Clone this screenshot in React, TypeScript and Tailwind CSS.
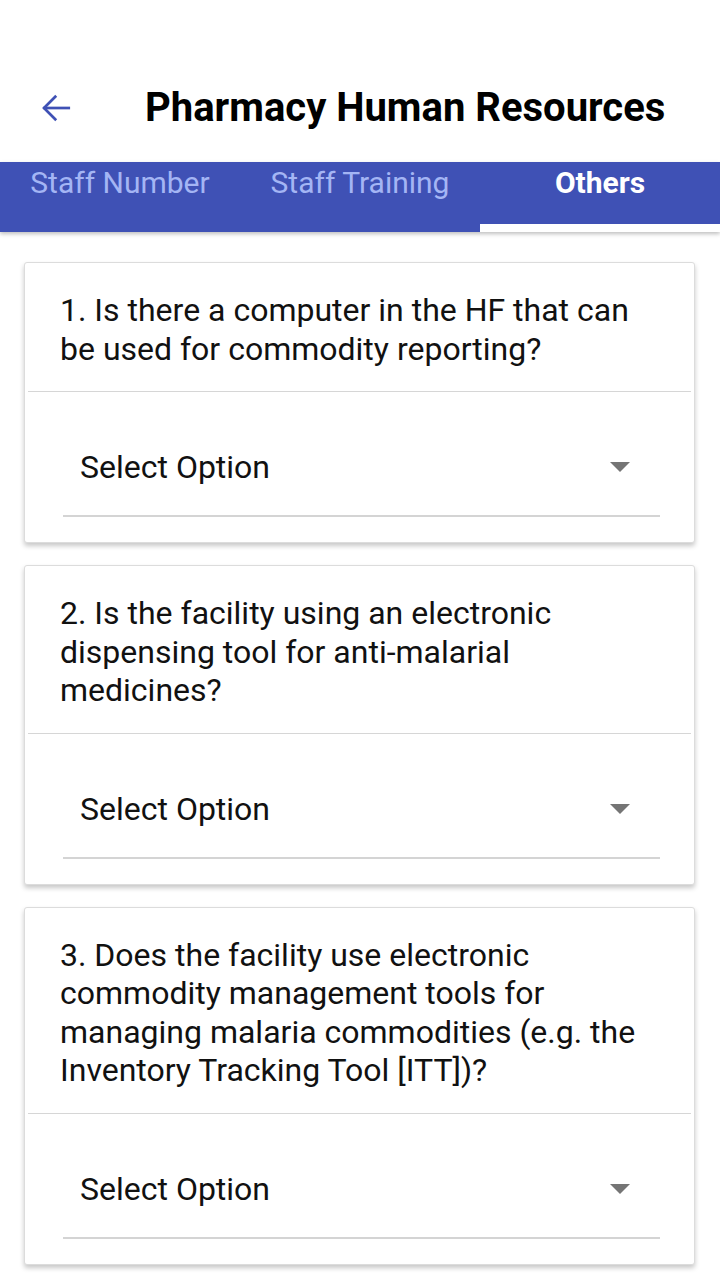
const tabs = ['Staff Number', 'Staff Training', 'Others'];

const questions = [
  '1. Is there a computer in the HF that can be used for commodity reporting?',
  '2. Is the facility using an electronic dispensing tool for anti-malarial medicines?',
  '3. Does the facility use electronic commodity management tools for managing malaria commodities (e.g. the Inventory Tracking Tool [ITT])?',
];

function QuestionCard({ text }: { text: string }) {
  return (
    <div className="bg-white border border-[#dcdcdc] rounded-[3px] shadow-[0_3px_5px_rgba(0,0,0,0.22)]">
      <div className="pl-[35px] pr-[34px] pt-[28px] pb-[23px] text-[32px] leading-[38.5px] text-[#111]">{text}</div>
      <div className="mx-[3px] h-px bg-[#d6d6d6]" />
      <div className="pl-[38px] pr-[34px] pt-[55px] pb-[25px]">
        <div className="flex items-center justify-between pl-[17px] pr-[30px] h-[40px]">
          <span className="text-[32px] text-[#111]">Select Option</span>
          <svg width="20" height="10" viewBox="0 0 20 10">
            <path d="M0 0 L20 0 L10 10 Z" fill="#757575" />
          </svg>
        </div>
        <div className="mt-[28px] h-[2px] bg-[#d4d4d4]" />
      </div>
    </div>
  );
}

export default function App() {
  return (
    <div className="w-[720px] h-[1280px] bg-white overflow-hidden" style={{ fontFamily: 'Roboto, "Liberation Sans", sans-serif' }}>
      <div className="h-[162px] flex items-end pb-[34px]">
        <div className="flex items-center h-[40px]">
          <svg className="ml-[38px]" width="36" height="36" viewBox="0 0 24 24" fill="none" stroke="#3f51b5" strokeWidth="1.8" strokeLinecap="square">
            <path d="M20.5 12 H4.5" />
            <path d="M11.5 4.5 L4 12 L11.5 19.5" />
          </svg>
          <h1 className="ml-[71px] text-[40px] font-bold text-black">Pharmacy Human Resources</h1>
        </div>
      </div>
      <div className="relative h-[70px] bg-[#3f51b5] shadow-[0_2px_4px_rgba(0,0,0,0.25)] flex">
        {tabs.map((t, i) => (
          <div key={t} className="w-[240px] flex justify-center -mt-[2px]">
            <span className={i === 2 ? 'text-[30px] font-bold text-white' : 'text-[30px] text-[#a4b5f4]'}>{t}</span>
          </div>
        ))}
        <div className="absolute left-[480px] bottom-0 w-[240px] h-[8px] bg-white" />
      </div>
      <div className="pl-[24px] pt-[30px] pr-[25px] flex flex-col gap-[22px]">
        {questions.map((q) => (
          <QuestionCard key={q} text={q} />
        ))}
      </div>
    </div>
  );
}
